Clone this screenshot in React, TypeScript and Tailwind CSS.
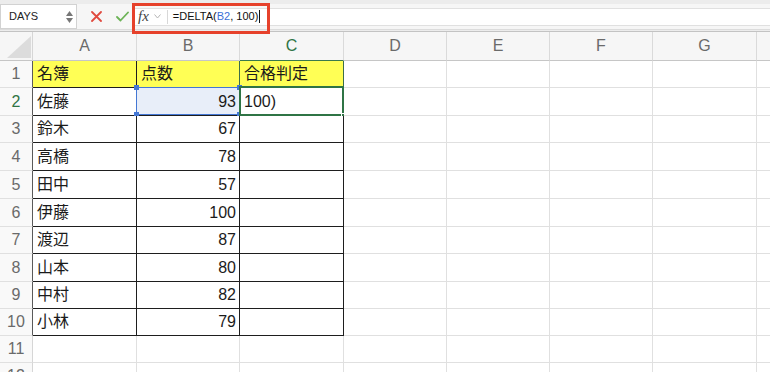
import React from "react";

const colDefs = [
  { l: "A", w: "w-[104px]" },
  { l: "B", w: "w-[103px]" },
  { l: "C", w: "w-[104px]" },
  { l: "D", w: "w-[103px]" },
  { l: "E", w: "w-[103px]" },
  { l: "F", w: "w-[103px]" },
  { l: "G", w: "w-[104px]" },
  { l: "", w: "w-[30px]" },
];

const rowH = [
  "h-[27px]",
  "h-[28px]",
  "h-[27px]",
  "h-[28px]",
  "h-[28px]",
  "h-[28px]",
  "h-[27px]",
  "h-[28px]",
  "h-[27px]",
  "h-[27px]",
  "h-[27px]",
  "h-[27px]",
];

const names = ["名簿", "佐藤", "鈴木", "高橋", "田中", "伊藤", "渡辺", "山本", "中村", "小林"];
const scores = ["点数", "93", "67", "78", "57", "100", "87", "80", "82", "79"];

const FONT = { fontFamily: '"Liberation Sans", "Noto Sans CJK JP", sans-serif' };

function Cell({ r, c }: { r: number; c: number }) {
  const inTable = r < 10 && c < 3;
  const yellow = r === 0 && c < 3;
  const border = inTable ? "border-r-[#1e1e1e] border-b-[#1e1e1e]" : "border-r-[#e0e0e0] border-b-[#e0e0e0]";
  const rightGreen = r === 0 && (c === 1 || c === 2) ? "border-r-[#3c6e4a]" : "";
  let content: React.ReactNode = null;
  let align = "justify-start pl-[4px]";
  if (inTable) {
    if (c === 0) content = names[r];
    if (c === 1) {
      content = scores[r];
      if (r > 0) align = "justify-end pr-[3px]";
    }
    if (c === 2 && r === 0) content = "合格判定";
    if (c === 2 && r === 1) content = "100)";
  }
  return (
    <div
      className={`relative box-border flex shrink-0 items-center border-r border-b ${border} ${rightGreen} ${colDefs[c].w} ${
        yellow ? "bg-[#ffff55]" : r === 1 && c === 1 ? "bg-[#e8eef9]" : "bg-white"
      } ${align} text-[16px] text-[#1b1b1b]`}
    >
      <span className="leading-none">{content}</span>
      {r === 1 && c === 1 && (
        <div className="pointer-events-none absolute -left-[1px] -top-[1px] -right-[1px] bottom-0 border-[1.5px] border-[#4477d4]">
          <div className="absolute -left-[3px] -top-[3px] h-[5px] w-[5px] bg-[#4477d4]" />
          <div className="absolute -right-[3px] -top-[3px] h-[5px] w-[5px] bg-[#4477d4]" />
          <div className="absolute -left-[3px] -bottom-[3px] h-[5px] w-[5px] bg-[#4477d4]" />
          <div className="absolute -right-[3px] -bottom-[3px] h-[5px] w-[5px] bg-[#4477d4]" />
        </div>
      )}
      {r === 1 && c === 2 && (
        <div className="pointer-events-none absolute -left-[1px] -top-[2px] -right-[1px] -bottom-[1px] border-2 border-[#2f7445]">
          <div className="absolute -right-[4px] -bottom-[4px] h-[5px] w-[5px] border border-white bg-[#2f7445]" />
        </div>
      )}
    </div>
  );
}

export default function App() {
  return (
    <div className="h-[372px] w-[770px] overflow-hidden bg-white" style={FONT}>
      {/* formula bar */}
      <div className="flex h-[32px] flex-col bg-[#f6f6f6]">
        <div className="h-[4px] bg-[#ececec]" />
        <div className="flex h-[25px] items-center">
          <div className="box-border flex h-[25px] w-[77px] items-center justify-between border border-[#d2d2d2] bg-white pl-[8px] pr-[3px]">
            <span className="text-[11px] text-[#222]">DAYS</span>
            <div className="flex flex-col items-center gap-[2px]">
              <svg width="7" height="5" viewBox="0 0 7 5">
                <path d="M3.5 0 L7 5 L0 5 Z" fill="#777" />
              </svg>
              <svg width="7" height="5" viewBox="0 0 7 5">
                <path d="M0 0 L7 0 L3.5 5 Z" fill="#777" />
              </svg>
            </div>
          </div>
          <div className="flex w-[55px] items-center">
            <svg className="ml-[14px]" width="11" height="11" viewBox="0 0 11 11">
              <path d="M1 1 L10 10 M10 1 L1 10" stroke="#e04a3f" strokeWidth="1.8" strokeLinecap="round" />
            </svg>
            <svg className="ml-[14px]" width="13" height="11" viewBox="0 0 13 11">
              <path d="M1 6 L4.5 9.5 L12 1.5" stroke="#6cb356" strokeWidth="1.8" fill="none" strokeLinecap="round" strokeLinejoin="round" />
            </svg>
          </div>
          <div className="relative flex h-[18px] flex-1 items-center border-y border-[#e0e0e0] bg-white">
            <span
              className="ml-[6px] text-[15px] italic leading-none text-[#444]"
              style={{ fontFamily: '"Liberation Serif", serif' }}
            >
              fx
            </span>
            <svg className="ml-[5px]" width="7" height="5" viewBox="0 0 7 5">
              <path d="M0.5 0.5 L3.5 4 L6.5 0.5" stroke="#b5b5b5" strokeWidth="1" fill="none" />
            </svg>
            <div className="ml-[6px] h-[14px] w-px bg-[#d8d8d8]" />
            <span className="ml-[5px] text-[11px] leading-none text-[#111]">
              =DELTA(<span className="text-[#3a6fd8]">B2</span>, 100)
            </span>
            <div className="ml-[1px] h-[13px] w-px bg-[#111]" />
            <div className="pointer-events-none absolute -top-[6px] left-0 h-[31px] w-[138px] border-[3px] border-[#e6412b]" />
          </div>
        </div>
        <div className="box-border h-[3px] border-t border-b border-t-[#dcdcdc] border-b-[#c3c3c3] bg-[#ececec]" />
      </div>

      {/* header row */}
      <div className="flex h-[29px]">
        <div className="relative box-border h-[29px] w-[33px] shrink-0 border-r border-b border-r-[#d6d6d6] border-b-[#c6c6c6] bg-[#f6f6f6]">
          <svg className="absolute left-0 top-0" width="33" height="29" viewBox="0 0 33 29">
            <path d="M7 26 L31 4 L31 26 Z" fill="#dcdcdc" />
          </svg>
        </div>
        {colDefs.map((c, i) => (
          <div
            key={i}
            className={`box-border flex h-[29px] shrink-0 items-center justify-center border-r border-b border-r-[#dadada] ${
              i === 2 ? "border-b-[#3a7a4d] text-[#2f7445]" : "border-b-[#c6c6c6] text-[#6a6a6a]"
            } ${c.w} bg-[#f6f6f6] text-[16px]`}
          >
            {c.l}
          </div>
        ))}
      </div>

      {/* rows */}
      {rowH.map((h, r) => (
        <div key={r} className={`flex ${h}`}>
          <div
            className={`box-border flex w-[33px] shrink-0 items-center justify-center border-r border-b border-b-[#e0e0e0] ${
              r < 10 ? "border-r-[#5a5a5a]" : "border-r-[#d6d6d6]"
            } bg-[#f9f9f9] text-[16px] ${r === 1 ? "text-[#2f7445]" : "text-[#6a6a6a]"}`}
          >
            {r + 1}
          </div>
          {colDefs.map((_, c) => (
            <Cell key={c} r={r} c={c} />
          ))}
        </div>
      ))}
    </div>
  );
}
